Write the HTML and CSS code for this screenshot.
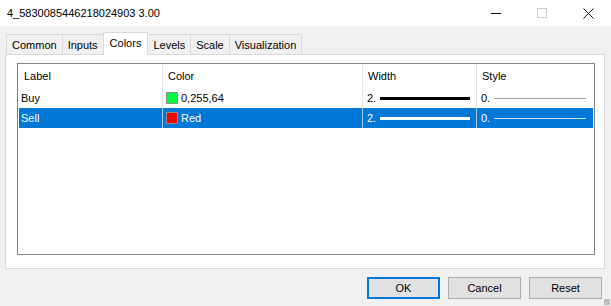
FILE: index.html
```html
<!DOCTYPE html>
<html lang="en">
<head>
    <meta charset="UTF-8">
    <title>4_5830085446218024903 3.00</title>
    <link rel="stylesheet" href="styles.css">
</head>
<body>
    <div class="titlebar">
        <span class="title">4_5830085446218024903 3.00</span>
        <div class="controls">
            <div class="ctl"><span class="minimize"></span></div>
            <div class="ctl"><span class="maximize"></span></div>
            <div class="ctl">
                <svg width="11" height="11" viewBox="0 0 11 11">
                    <path d="M0.5 0.5 L10.5 10.5 M10.5 0.5 L0.5 10.5" stroke="#111" stroke-width="1" fill="none"/>
                </svg>
            </div>
        </div>
    </div>

    <div class="tabs">
        <div class="tab">Common</div>
        <div class="tab">Inputs</div>
        <div class="tab active">Colors</div>
        <div class="tab">Levels</div>
        <div class="tab">Scale</div>
        <div class="tab">Visualization</div>
    </div>

    <div class="panel">
        <div class="list">
            <div class="row head">
                <div class="cell">Label</div>
                <div class="cell">Color</div>
                <div class="cell">Width</div>
                <div class="cell">Style</div>
            </div>
            <div class="row">
                <div class="cell">Buy</div>
                <div class="cell"><span class="swatch green"></span>0,255,64</div>
                <div class="cell"><span class="num">2.</span><span class="line thick"></span></div>
                <div class="cell"><span class="num">0.</span><span class="line thin"></span></div>
            </div>
            <div class="row selected">
                <div class="cell">Sell</div>
                <div class="cell"><span class="swatch red"></span>Red</div>
                <div class="cell"><span class="num">2.</span><span class="line thick"></span></div>
                <div class="cell"><span class="num">0.</span><span class="line thin"></span></div>
            </div>
        </div>
    </div>

    <div class="buttons">
        <button class="btn default">OK</button>
        <button class="btn">Cancel</button>
        <button class="btn">Reset</button>
    </div>
    <div class="grip"></div>
</body>
</html>
```

FILE: styles.css
```css
body {
    font-family: 'Liberation Sans', Arial, sans-serif;
    font-size: 11px;
    background-color: #f0f0f0;
    color: #000;
    margin: 0;
    padding: 0;
    width: 611px;
    height: 306px;
    overflow: hidden;
    position: relative;
}
.titlebar {
    height: 26px;
    background-color: #ffffff;
    display: flex;
    align-items: center;
    justify-content: space-between;
}
.title {
    padding-left: 7px;
    font-size: 11px;
}
.controls {
    display: flex;
    height: 26px;
}
.ctl {
    width: 46px;
    display: flex;
    align-items: center;
    justify-content: center;
}
.minimize {
    display: block;
    width: 10px;
    height: 1px;
    background-color: #111;
}
.maximize {
    display: block;
    width: 8px;
    height: 8px;
    border: 1px solid #cccccc;
}
.ctl svg {
    display: block;
}
.tabs {
    display: flex;
    align-items: flex-end;
    height: 28px;
    padding-left: 6px;
    position: relative;
    z-index: 1;
}
.tab {
    height: 20px;
    line-height: 20px;
    padding: 0 5px;
    border: 1px solid #d9d9d9;
    border-bottom: none;
    border-right: none;
    box-sizing: border-box;
    background-color: #f0f0f0;
}
.tab:last-child {
    border-right: 1px solid #d9d9d9;
}
.tab.active {
    height: 23px;
    line-height: 20px;
    background-color: #ffffff;
    margin-bottom: -1px;
    border-right: 1px solid #d9d9d9;
    padding: 0 6px;
}
.tab.active + .tab {
    border-left: none;
}
.panel {
    margin: 0 6px 0 5px;
    height: 215px;
    box-sizing: border-box;
    background-color: #ffffff;
    border: 1px solid #d9d9d9;
    padding: 8px 9px 0 11px;
}
.list {
    height: 192px;
    box-sizing: border-box;
    border: 1px solid #828282;
    padding: 0 1px;
}
.row {
    display: grid;
    grid-template-columns: 143px 200px 114px 1fr;
    height: 20px;
}
.row.head {
    height: 24px;
}
.cell {
    display: flex;
    align-items: center;
    padding-left: 4px;
    border-left: 1px solid #e5e5e5;
    white-space: nowrap;
    overflow: hidden;
}
.cell:first-child {
    border-left: none;
    padding-left: 2px;
}
.head .cell {
    padding-left: 5px;
}
.head .cell:first-child {
    padding-left: 5px;
}
.selected {
    background-color: #0078d7;
    color: #ffffff;
}
.selected .cell {
    border-left-color: #a6c8ec;
}
.swatch {
    display: block;
    width: 10px;
    height: 10px;
    border: 1px solid #8c8c8c;
    margin: 0 3px 0 -1px;
}
.swatch.green { background-color: #00ff40; }
.swatch.red { background-color: #ff0000; }
.num {
    display: block;
    width: 13px;
}
.line {
    display: block;
}
.line.thick {
    width: 90px;
    height: 3px;
    background-color: #000;
}
.line.thin {
    width: 92px;
    height: 1px;
    background-color: #a0a0a0;
}
.selected .line.thick {
    background-color: #ffffff;
}
.selected .line.thin {
    background-color: #d0e4f7;
}
.buttons {
    display: flex;
    justify-content: flex-end;
    gap: 8px;
    padding: 8px 9px 0 0;
}
.btn {
    font-family: inherit;
    font-size: 11px;
    width: 73px;
    height: 22px;
    background-color: #e1e1e1;
    border: 1px solid #adadad;
    padding: 0;
    color: #000;
}
.btn.default {
    border: 2px solid #0078d7;
}
.grip {
    position: absolute;
    right: 1px;
    bottom: 1px;
    width: 6px;
    height: 6px;
    background-image: radial-gradient(circle, #bcbcbc 0.8px, transparent 1px);
    background-size: 2px 2px;
}
```
